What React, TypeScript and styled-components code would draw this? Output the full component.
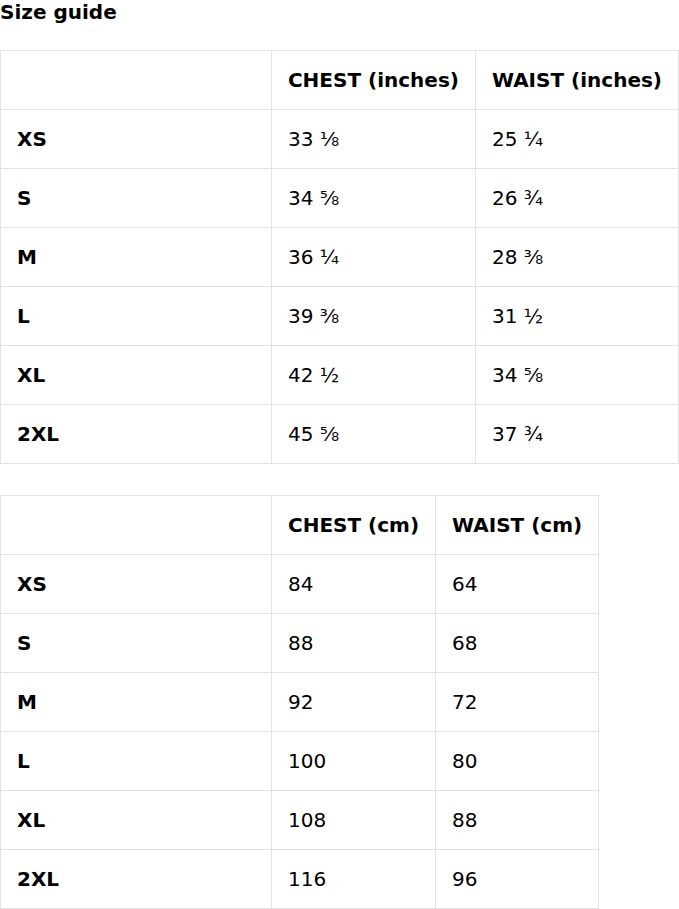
import React from "react";
import styled, { createGlobalStyle } from "styled-components";

const Global = createGlobalStyle`
  html, body { margin: 0; padding: 0; background: #fff; }
  body { font-family: "DejaVu Sans", "Noto Sans", sans-serif; color: #000; }
`;

const Page = styled.div`
  display: flex;
  flex-direction: column;
  align-items: flex-start;
  gap: 31px;
`;

const Title = styled.h2`
  margin: 0 0 -5px;
  font-size: 20px;
  line-height: 24px;
  font-weight: 700;
`;

const Table = styled.table`
  border-collapse: collapse;
  font-size: 20px;
`;

const Cell = styled.td<{ $bold?: boolean }>`
  border: 1px solid #e3e3e3;
  padding: 17px 16px;
  line-height: 24px;
  text-align: left;
  font-weight: ${(p) => (p.$bold ? 700 : 400)};
  white-space: nowrap;
`;

const FirstCell = styled(Cell)`
  width: 238px;
`;

type Row = [string, string, string];

const inches: Row[] = [
  ["XS", "33 ⅛", "25 ¼"],
  ["S", "34 ⅝", "26 ¾"],
  ["M", "36 ¼", "28 ⅜"],
  ["L", "39 ⅜", "31 ½"],
  ["XL", "42 ½", "34 ⅝"],
  ["2XL", "45 ⅝", "37 ¾"],
];

const cms: Row[] = [
  ["XS", "84", "64"],
  ["S", "88", "68"],
  ["M", "92", "72"],
  ["L", "100", "80"],
  ["XL", "108", "88"],
  ["2XL", "116", "96"],
];

function SizeTable({ head, rows }: { head: [string, string]; rows: Row[] }) {
  return (
    <Table>
      <tbody>
        <tr>
          <FirstCell />
          <Cell $bold>{head[0]}</Cell>
          <Cell $bold>{head[1]}</Cell>
        </tr>
        {rows.map((r) => (
          <tr key={r[0]}>
            <FirstCell $bold>{r[0]}</FirstCell>
            <Cell>{r[1]}</Cell>
            <Cell>{r[2]}</Cell>
          </tr>
        ))}
      </tbody>
    </Table>
  );
}

export default function App() {
  return (
    <>
      <Global />
      <Page>
        <Title>Size guide</Title>
        <SizeTable head={["CHEST (inches)", "WAIST (inches)"]} rows={inches} />
        <SizeTable head={["CHEST (cm)", "WAIST (cm)"]} rows={cms} />
      </Page>
    </>
  );
}
